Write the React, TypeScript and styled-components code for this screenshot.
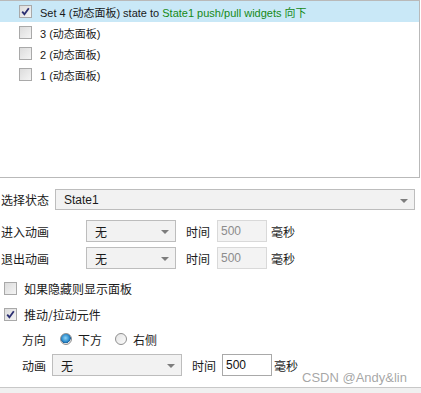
import React from 'react'
import styled, { createGlobalStyle } from 'styled-components'

const GlobalStyle = createGlobalStyle`
  html, body {
    margin: 0;
    padding: 0;
    background: #ffffff;
  }
  body {
    font-family: 'Liberation Sans', 'Noto Sans CJK SC', sans-serif;
    font-size: 12px;
    color: #1a1a1a;
  }
`

type ActionItem = {
  id: string
  label: string
  target?: string
  checked: boolean
}

const actions: ActionItem[] = [
  { id: '4', label: 'Set 4 (动态面板) state to ', target: 'State1 push/pull widgets 向下', checked: true },
  { id: '3', label: '3 (动态面板)', checked: false },
  { id: '2', label: '2 (动态面板)', checked: false },
  { id: '1', label: '1 (动态面板)', checked: false },
]

const CheckBox = ({ checked }: { checked: boolean }) => (
  <Box>
    {checked && (
      <svg width="9" height="9" viewBox="0 0 9 9">
        <path d="M1.2 4.6 L3.4 7.2 L7.8 1.2" fill="none" stroke="#2b2f72" strokeWidth="1.8" />
      </svg>
    )}
  </Box>
)

const Dropdown = ({ value, width }: { value: string; width: number }) => (
  <SelectBox $width={width}>
    <span>{value}</span>
    <Caret />
  </SelectBox>
)

const App = () => {
  return (
    <>
      <GlobalStyle />
      <Page>
        <ListPanel>
          {actions.map((a) => (
            <ListRow key={a.id} $selected={a.checked}>
              <CheckBox checked={a.checked} />
              <span>
                {a.label}
                {a.target && <Target>{a.target}</Target>}
              </span>
            </ListRow>
          ))}
        </ListPanel>

        <Form>
          <Row $top={11} $height={21}>
            <Label $width={54}>选择状态</Label>
            <Dropdown value="State1" width={360} />
          </Row>

          <Row $top={10} $height={22}>
            <Label $width={85}>进入动画</Label>
            <Dropdown value="无" width={90} />
            <Label $gap={10}>时间</Label>
            <NumberBox $disabled $gap={7}>500</NumberBox>
            <Label $gap={4}>毫秒</Label>
          </Row>

          <Row $top={5} $height={22}>
            <Label $width={85}>退出动画</Label>
            <Dropdown value="无" width={90} />
            <Label $gap={10}>时间</Label>
            <NumberBox $disabled $gap={7}>500</NumberBox>
            <Label $gap={4}>毫秒</Label>
          </Row>

          <Row $top={9} $height={20} $indent={3}>
            <CheckBox checked={false} />
            <Label $gap={7}>如果隐藏则显示面板</Label>
          </Row>

          <Row $top={6} $height={20} $indent={3}>
            <CheckBox checked />
            <Label $gap={7}>推动/拉动元件</Label>
          </Row>

          <Row $top={5} $height={20} $indent={21}>
            <Label $width={38}>方向</Label>
            <Radio $on />
            <Label $gap={6}>下方</Label>
            <Radio $gap={13} />
            <Label $gap={6}>右侧</Label>
          </Row>

          <Row $top={5} $height={22} $indent={21}>
            <Label $width={30}>动画</Label>
            <Dropdown value="无" width={130} />
            <Label $gap={10}>时间</Label>
            <NumberBox $gap={6}>500</NumberBox>
            <Label $gap={2}>毫秒</Label>
          </Row>
        </Form>

        <Footer />
        <Watermark>CSDN @Andy&amp;lin</Watermark>
      </Page>
    </>
  )
}

export default App

const Page = styled.div`
  position: relative;
  width: 421px;
  height: 393px;
  display: flex;
  flex-direction: column;
  overflow: hidden;
`

const ListPanel = styled.div`
  width: 419px;
  height: 176px;
  border-top: 1px solid #b9b9b9;
  border-right: 1px solid #b9b9b9;
  border-bottom: 1px solid #b9b9b9;
  display: flex;
  flex-direction: column;
`

const ListRow = styled.div<{ $selected?: boolean }>`
  height: 21px;
  display: flex;
  align-items: center;
  gap: 8px;
  padding-left: 19px;
  font-size: 11px;
  background: ${(p) => (p.$selected ? '#c9e8f7' : 'transparent')};
  white-space: nowrap;
`

const Target = styled.span`
  color: #168a16;
`

const Box = styled.span`
  width: 11px;
  height: 11px;
  flex: none;
  border: 1px solid #a9a9a9;
  background: linear-gradient(135deg, #dcdcdc 0%, #f4f4f4 100%);
  display: flex;
  align-items: center;
  justify-content: center;
`

const Form = styled.div`
  display: flex;
  flex-direction: column;
  padding-left: 1px;
`

const Row = styled.div<{ $top: number; $height: number; $indent?: number }>`
  margin-top: ${(p) => p.$top}px;
  height: ${(p) => p.$height}px;
  padding-left: ${(p) => p.$indent ?? 0}px;
  display: flex;
  align-items: center;
  white-space: nowrap;
`

const Label = styled.span<{ $width?: number; $gap?: number }>`
  flex: none;
  width: ${(p) => (p.$width ? `${p.$width}px` : 'auto')};
  margin-left: ${(p) => p.$gap ?? 0}px;
  font-family: 'Noto Sans CJK SC', sans-serif;
  font-size: 12px;
  color: #1a1a1a;
`

const SelectBox = styled.div<{ $width: number }>`
  flex: none;
  box-sizing: border-box;
  width: ${(p) => p.$width}px;
  height: 100%;
  border: 1px solid #bdbdbd;
  background: #f2f2f2;
  display: flex;
  align-items: center;
  justify-content: space-between;
  padding: 0 6px 0 8px;
  font-size: 12px;
  color: #1a1a1a;
  font-family: 'Liberation Sans', 'Noto Sans CJK SC', sans-serif;
`

const Caret = styled.span`
  width: 0;
  height: 0;
  border-left: 4px solid transparent;
  border-right: 4px solid transparent;
  border-top: 4px solid #7d7d7d;
  margin-top: 2px;
`

const NumberBox = styled.div<{ $disabled?: boolean; $gap?: number }>`
  flex: none;
  box-sizing: border-box;
  width: 50px;
  height: 100%;
  margin-left: ${(p) => p.$gap ?? 0}px;
  padding-left: 3px;
  display: flex;
  align-items: center;
  border: 1px solid ${(p) => (p.$disabled ? '#d9d9d9' : '#a9a9a9')};
  background: ${(p) => (p.$disabled ? '#f3f3f3' : '#ffffff')};
  color: ${(p) => (p.$disabled ? '#8c8c8c' : '#111111')};
  font-size: 12px;
`

const Radio = styled.span<{ $on?: boolean; $gap?: number }>`
  flex: none;
  box-sizing: border-box;
  width: 12px;
  height: 12px;
  margin-left: ${(p) => p.$gap ?? 0}px;
  border-radius: 50%;
  border: 1px solid #8f8f8f;
  background: ${(p) =>
    p.$on
      ? 'radial-gradient(circle at 45% 40%, #8fd3f5 0%, #2f8fcf 45%, #1b5f9a 62%, #e6e6e6 66%, #f7f7f7 100%)'
      : 'linear-gradient(135deg, #e4e4e4 0%, #fbfbfb 100%)'};
`

const Footer = styled.div`
  margin-top: 11px;
  flex: 1;
  border-top: 1px solid #c8c8c8;
  background: #f0f0f0;
`

const Watermark = styled.div`
  position: absolute;
  left: 302px;
  top: 370px;
  font-family: 'Liberation Sans', sans-serif;
  font-size: 13px;
  color: rgba(150, 150, 150, 0.85);
  pointer-events: none;
`
